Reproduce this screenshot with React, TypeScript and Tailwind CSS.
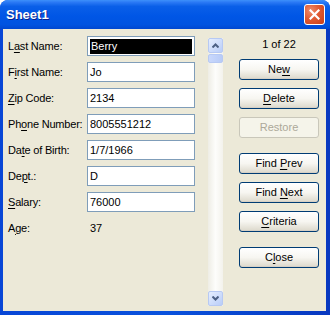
import React from "react"

/**
 * Excel data form dialog (Windows XP Luna look)
 */

const FONT = { fontFamily: '"Liberation Sans", Arial, sans-serif' }

interface FieldRowProps {
  before: string
  key1: string
  after: string
  value?: string
  selected?: boolean
  plain?: boolean
}

function Label({ before, key1, after }: { before: string; key1: string; after: string }) {
  return (
    <span className="w-[79px] shrink-0 text-[11px] text-black whitespace-pre tracking-[-0.2px]">
      {before}
      <span className="underline underline-offset-[2px]">{key1}</span>
      {after}
    </span>
  )
}

function FieldRow({ before, key1, after, value, selected, plain }: FieldRowProps) {
  return (
    <div className="flex items-center h-[20px]">
      <Label before={before} key1={key1} after={after} />
      {plain ? (
        <span className="pl-[3px] text-[11px] text-black">{value}</span>
      ) : (
        <div className="w-[108px] h-[20px] border border-[#7f9db9] bg-white flex items-center">
          {selected ? (
            <div className="mx-[2px] h-[15px] flex-1 bg-black text-white text-[11px] leading-[15px] pl-[1px]">
              {value}
            </div>
          ) : (
            <span className="pl-[2px] text-[11px] text-black">{value}</span>
          )}
        </div>
      )}
    </div>
  )
}

interface BtnProps {
  before?: string
  key1?: string
  after?: string
  disabled?: boolean
  className?: string
}

function Btn({ before = "", key1 = "", after = "", disabled, className = "" }: BtnProps) {
  if (disabled) {
    return (
      <div
        className={`h-[21px] w-[80px] rounded-[3px] border border-[#c9c7ba] bg-[#f5f4ea] flex items-center justify-center text-[11px] text-[#aca899] ${className}`}
      >
        <span className="whitespace-pre">
          {before}
          {key1}
          {after}
        </span>
      </div>
    )
  }
  return (
    <div
      className={`h-[21px] w-[80px] rounded-[3px] border border-[#003c74] bg-gradient-to-b from-white via-[#f7f6f1] to-[#dcd8cb] flex items-center justify-center text-[11px] text-black shadow-[inset_0_-1px_0_#d6d0c5] ${className}`}
    >
      <span className="whitespace-pre">
        {before}
        <span className="underline underline-offset-[2px]">{key1}</span>
        {after}
      </span>
    </div>
  )
}

function Chevron({ up }: { up?: boolean }) {
  return (
    <svg width="7" height="5" viewBox="0 0 7 5">
      <path
        d={up ? "M0.5 4.5 L3.5 1.5 L6.5 4.5" : "M0.5 0.5 L3.5 3.5 L6.5 0.5"}
        fill="none"
        stroke="#4d6185"
        strokeWidth="2"
      />
    </svg>
  )
}

function ScrollBar() {
  const btn =
    "h-[15px] w-full rounded-[2px] border border-[#b7c9f3] bg-gradient-to-br from-[#e6eefe] to-[#b9cdf8] flex items-center justify-center"
  return (
    <div className="ml-[13px] mt-[9px] mb-[5px] w-[15px] flex flex-col bg-gradient-to-r from-[#eeede5] via-[#fdfdfb] to-[#f3f2ec]">
      <div className={btn}>
        <Chevron up />
      </div>
      <div className="mt-[1px] h-[9px] w-full rounded-[2px] border border-[#b7c9f3] bg-gradient-to-r from-[#c9d8fc] to-[#b8cbf7]" />
      <div className="flex-1" />
      <div className={btn}>
        <Chevron />
      </div>
    </div>
  )
}

export default function App() {
  return (
    <div style={FONT} className="w-[330px] h-[315px] flex flex-col rounded-t-[8px] bg-[#0a52dd] overflow-hidden">
      {/* title bar */}
      <div className="h-[29px] shrink-0 flex items-center justify-between pl-[6px] pr-[5px] bg-[linear-gradient(to_bottom,#3d90fb_0%,#2a79f5_8%,#0a5fe8_22%,#0056e6_55%,#0053e0_85%,#0047d0_100%)]">
        <span className="text-[13px] font-bold text-white [text-shadow:1px_1px_0_#0a1f8a]">Sheet1</span>
        <div className="w-[21px] h-[21px] rounded-[3px] border border-white bg-[radial-gradient(circle_at_30%_30%,#ef8d6c_0%,#e05a32_45%,#c83e18_100%)] flex items-center justify-center">
          <svg width="11" height="11" viewBox="0 0 11 11">
            <path d="M1.5 1.5 L9.5 9.5 M9.5 1.5 L1.5 9.5" stroke="white" strokeWidth="2.2" strokeLinecap="square" />
          </svg>
        </div>
      </div>

      {/* frame + client */}
      <div className="flex-1 flex pl-[3px] pr-[4px] pb-[4px] bg-gradient-to-r from-[#0846d6] via-[#0a52dd] to-[#0838c0]">
        <div className="flex-1 flex bg-[#ece9d8]">
          {/* fields */}
          <div className="pl-[5px] pt-[7px] flex flex-col gap-[6px]">
            <FieldRow before="L" key1="a" after="st Name:" value="Berry" selected />
            <FieldRow before="F" key1="i" after="rst Name:" value="Jo" />
            <FieldRow before="" key1="Z" after="ip Code:" value="2134" />
            <FieldRow before="Ph" key1="o" after="ne Number:" value="8005551212" />
            <FieldRow before="Da" key1="t" after="e of Birth:" value="1/7/1966" />
            <FieldRow before="De" key1="p" after="t.:" value="D" />
            <FieldRow before="" key1="S" after="alary:" value="76000" />
            <FieldRow before="A" key1="g" after="e:" value="37" plain />
          </div>

          <ScrollBar />

          {/* buttons */}
          <div className="ml-[16px] w-[80px] flex flex-col">
            <div className="mt-[8px] h-[15px] flex items-center justify-center text-[11px] text-black">1 of 22</div>
            <Btn className="mt-[7px]" before="Ne" key1="w" />
            <Btn className="mt-[8px]" key1="D" after="elete" />
            <Btn className="mt-[8px]" before="Restore" disabled />
            <Btn className="mt-[15px]" before="Find " key1="P" after="rev" />
            <Btn className="mt-[8px]" before="Find " key1="N" after="ext" />
            <Btn className="mt-[8px]" key1="C" after="riteria" />
            <Btn className="mt-[15px]" before="C" key1="l" after="ose" />
          </div>
        </div>
      </div>
    </div>
  )
}
